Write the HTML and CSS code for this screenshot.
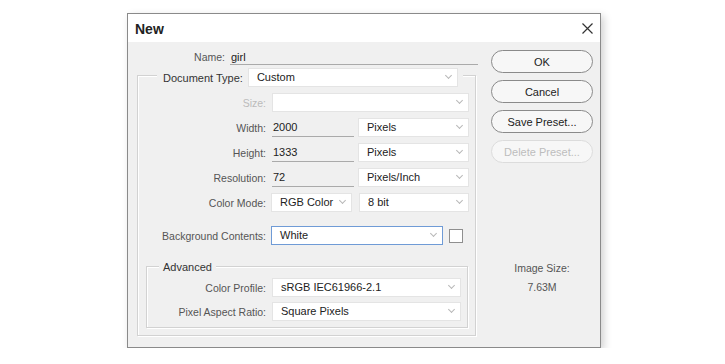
FILE: index.html
```html
<!DOCTYPE html>
<html>
<head>
<meta charset="utf-8">
<link rel="stylesheet" href="styles.css">
</head>
<body>
<div class="dialog">
  <div class="titlebar">
    <span class="title">New</span>
    <svg class="close" width="11" height="11" viewBox="0 0 11 11"><path d="M0.5 0.5L10.5 10.5M10.5 0.5L0.5 10.5" stroke="#333" stroke-width="1.2" fill="none"/></svg>
  </div>
  <div class="content">
    <div class="form">
      <div class="row name-row">
        <span class="label name-label">Name:</span>
        <span class="text name-input">girl</span>
      </div>
      <div class="group outer">
        <div class="head doc-head">
          <span class="label">Document Type:</span>
          <span class="select w-doc">Custom</span>
        </div>
        <div class="row first">
          <span class="label col disabled">Size:</span>
          <span class="select w-size"></span>
        </div>
        <div class="row">
          <span class="label col">Width:</span>
          <span class="text w-num">2000</span>
          <span class="select w-unit">Pixels</span>
        </div>
        <div class="row">
          <span class="label col">Height:</span>
          <span class="text w-num">1333</span>
          <span class="select w-unit">Pixels</span>
        </div>
        <div class="row">
          <span class="label col">Resolution:</span>
          <span class="text w-num">72</span>
          <span class="select w-unit">Pixels/Inch</span>
        </div>
        <div class="row">
          <span class="label col">Color Mode:</span>
          <span class="select w-mode">RGB Color</span>
          <span class="select w-bit">8 bit</span>
        </div>
        <div class="row bg-row">
          <span class="label col">Background Contents:</span>
          <span class="select w-bg focus">White</span>
          <span class="swatch"></span>
        </div>
        <div class="group inner">
          <div class="head adv-head">
            <span class="label">Advanced</span>
          </div>
          <div class="row adv-first">
            <span class="label col2">Color Profile:</span>
            <span class="select w-adv">sRGB IEC61966-2.1</span>
          </div>
          <div class="row">
            <span class="label col2">Pixel Aspect Ratio:</span>
            <span class="select w-adv">Square Pixels</span>
          </div>
        </div>
      </div>
    </div>
    <div class="side">
      <div class="btn">OK</div>
      <div class="btn">Cancel</div>
      <div class="btn">Save Preset...</div>
      <div class="btn off">Delete Preset...</div>
      <div class="imgsize">
        <div>Image Size:</div>
        <div>7.63M</div>
      </div>
    </div>
  </div>
</div>
</body>
</html>
```
FILE: styles.css
```css
* { box-sizing: border-box; }
body {
  margin: 0;
  background: #fff;
  font-family: "Liberation Sans", Arial, sans-serif;
  font-size: 10.5px;
  color: #333;
}
.dialog {
  margin: 13px 0 0 127px;
  width: 474px;
  height: 335px;
  border: 1px solid #8a8a8a;
  box-shadow: 3px 3px 8px rgba(0,0,0,0.18);
  display: flex;
  flex-direction: column;
}
.titlebar {
  height: 28px;
  background: #fff;
  display: flex;
  align-items: center;
  justify-content: space-between;
  padding: 2px 7px 0 7px;
}
.title {
  font-weight: bold;
  font-size: 14px;
  color: #222;
}
.close { margin-top: -1px; }
.content {
  flex: 1;
  background: #f0f0f0;
  display: flex;
}
.form {
  width: 352px;
  padding-top: 7px;
}
.row {
  display: flex;
  align-items: center;
  height: 19px;
}
.label {
  color: #555;
  white-space: nowrap;
}
.disabled { color: #bbb; }
.name-row { height: 16px; }
.name-label { width: 97px; text-align: right; }
.text {
  color: #222;
  height: 100%;
  display: flex;
  align-items: center;
  padding-left: 1px;
  border-bottom: 1px solid #aaa;
  font-size: 11px;
}
.name-input { margin-left: 5px; width: 248px; }
.w-num { width: 82px; margin-left: 6px; }

.group {
  border: 1px solid #d2d2d2;
  box-shadow: inset 1px 1px 0 #fff, 1px 1px 0 #fff;
}
.outer {
  margin: 10px 0 0 9px;
  width: 339px;
  padding-bottom: 7px;
}
.head {
  display: flex;
  width: fit-content;
  align-items: center;
  height: 19px;
  background: #f0f0f0;
  gap: 5px;
}
.doc-head {
  margin: -8px 0 0 19px;
  padding: 0 5px 0 6px;
}
.doc-head .label { color: #333; font-size: 11px; }
.outer > .row { margin-top: 6px; }
.outer > .row.first { margin-top: 6px; }
.outer > .row.bg-row { margin-top: 14px; }
.col { width: 128px; text-align: right; }
.col2 { width: 119px; text-align: right; }

.select {
  display: flex;
  align-items: center;
  height: 19px;
  background: #fff;
  border: 1px solid #e4e4e4;
  color: #222;
  padding: 0 6px 1px 8px;
  font-size: 11px;
}
.select::after {
  content: "";
  margin-left: auto;
  width: 4px;
  height: 4px;
  border-right: 1px solid #b8b8b8;
  border-bottom: 1px solid #b8b8b8;
  transform: rotate(45deg);
  margin-top: -3px;
}
.w-doc { width: 210px; }
.w-size { width: 197px; margin-left: 6px; }
.w-unit { width: 111px; margin-left: 4px; }
.w-mode { width: 81px; margin-left: 5px; }
.w-bit { width: 110px; margin-left: 7px; }
.w-bg { width: 172px; margin-left: 5px; }
.focus { border-color: #6f9bd6; }
.swatch {
  width: 14px;
  height: 14px;
  margin-left: 6px;
  background: #fff;
  border: 1px solid #8f8f8f;
}
.inner {
  margin: 21px 7px 0 8px;
  padding-bottom: 6px;
}
.adv-head {
  margin: -10px 0 0 12px;
  padding: 0 4px;
}
.adv-head .label { color: #333; font-size: 11px; }
.inner .row { margin-top: 5px; }
.inner .row.adv-first { margin-top: 2px; }
.w-adv { width: 189px; margin-left: 6px; }

.side {
  flex: 1;
  padding: 8px 0 0 11px;
  display: flex;
  flex-direction: column;
}
.btn {
  width: 102px;
  height: 23px;
  border: 1px solid #8a8a8a;
  border-radius: 12px;
  background: #f7f7f7;
  display: flex;
  align-items: center;
  justify-content: center;
  color: #222;
  font-size: 11px;
  margin-bottom: 7px;
}
.btn.off {
  border-color: #dcdcdc;
  color: #bdbdbd;
}
.imgsize {
  margin-top: 89px;
  width: 102px;
  text-align: center;
  color: #555;
  line-height: 19px;
}
```
